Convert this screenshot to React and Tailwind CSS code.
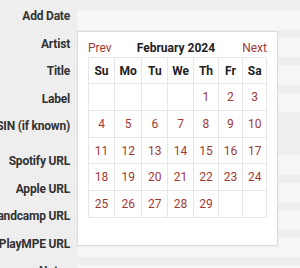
import React from "react";

const rows = [
  { label: "Add Date" },
  { label: "Artist" },
  { label: "Title" },
  { label: "Label" },
  { label: "ASIN (if known)", narrow: true },
  { label: "Spotify URL" },
  { label: "Apple URL" },
  { label: "Bandcamp URL" },
  { label: "PlayMPE URL" },
  { label: "Notes" },
];

const weeks = [
  ["", "", "", "", "1", "2", "3"],
  ["4", "5", "6", "7", "8", "9", "10"],
  ["11", "12", "13", "14", "15", "16", "17"],
  ["18", "19", "20", "21", "22", "23", "24"],
  ["25", "26", "27", "28", "29", "", ""],
];

const days = ["Su", "Mo", "Tu", "We", "Th", "Fr", "Sa"];
const widths = ["w-[26px]", "w-[27.4px]", "w-[25.8px]", "w-[25.8px]", "w-[25px]", "w-[24px]", "w-[24.4px]"];

export default function App() {
  return (
    <div
      className="relative w-[300px] h-[268px] overflow-hidden bg-[#eeeeee]"
      style={{ fontFamily: 'Roboto, "Noto Sans", sans-serif' }}
    >
      <div className="flex flex-col gap-[8px] pt-[10px]">
        {rows.map((r) => (
          <div key={r.label} className={`flex items-start gap-[7px] ${r.narrow ? "mb-[7.5px]" : ""}`}>
            <div className="w-[70px] shrink-0 flex justify-end -mt-[2px]">
              <span className="whitespace-nowrap text-[12px] leading-[16px] tracking-[-0.2px] font-bold text-[#333333]">
                {r.label}
              </span>
            </div>
            <div className={`h-[19.5px] bg-[#f5f6f8] ${r.narrow ? "w-[180px]" : "flex-1"}`} />
          </div>
        ))}
      </div>

      <div className="absolute left-[77px] top-[30.7px] w-[201px] h-[215.3px] bg-white border border-[#dcdcdc] shadow-[0_1px_2px_rgba(0,0,0,0.04)]">
        <div className="pt-[8px] px-[10px] flex items-center justify-between h-[25px]">
          <span className="text-[12px] leading-[17px] text-[#9e3a36]">Prev</span>
          <span className="text-[12px] leading-[17px] font-bold text-[#222222] -ml-[2px]">February 2024</span>
          <span className="text-[12px] leading-[17px] text-[#9e3a36]">Next</span>
        </div>
        <table className="ml-[10px] table-fixed border-collapse w-[179px]">
          <thead>
            <tr>
              {days.map((d, i) => (
                <th
                  key={d}
                  className={`${widths[i]} h-[26.7px] p-0 border border-[#e6e6e6] text-center text-[12px] font-bold text-[#222222]`}
                >
                  {d}
                </th>
              ))}
            </tr>
          </thead>
          <tbody>
            {weeks.map((w, wi) => (
              <tr key={wi}>
                {w.map((n, i) => (
                  <td
                    key={i}
                    className="h-[26.7px] p-0 border border-[#e6e6e6] text-center text-[12px] text-[#9e3a36]"
                  >
                    {n}
                  </td>
                ))}
              </tr>
            ))}
          </tbody>
        </table>
      </div>
    </div>
  );
}
